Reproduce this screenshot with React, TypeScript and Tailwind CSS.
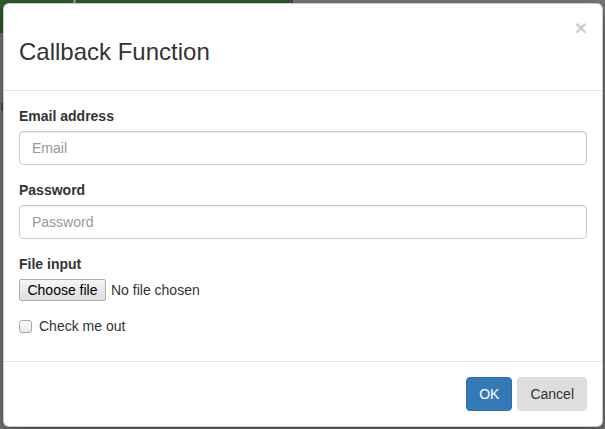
export default function App() {
    return (
        <div className="relative w-[605px] h-[429px] overflow-hidden bg-[#7a7a7a] font-['Liberation_Sans',Arial,sans-serif] text-[14px] text-[#333]">
            {/* page behind the backdrop */}
            <div className="flex h-[33px] w-[293px] bg-[#2e5c2e]">
                <div className="ml-[73px] h-[4px] w-[3px] bg-[#8a8a8a]"></div>
            </div>
            <div className="ml-[1px] mt-[70px] h-[8px] w-[2px] bg-[#6b4a2a]"></div>

            {/* modal */}
            <div className="absolute left-[3px] top-[3px] w-[600px] rounded-[6px] border border-black/20 bg-white shadow-[0_5px_15px_rgba(0,0,0,0.5)]">
                <div className="relative border-b border-[#e5e5e5] px-[15px] pb-[24px] pt-[34px]">
                    <h4 className="text-[24px] leading-[28px]">Callback Function</h4>
                    <button className="absolute right-[15px] top-[13px] text-[21px] font-bold leading-[21px] text-black opacity-20">×</button>
                </div>

                <div className="px-[15px] pt-[15px] pb-[15px]">
                    <div className="mb-[15px]">
                        <label className="mb-[5px] block font-bold leading-[20px]">Email address</label>
                        <input
                            type="email"
                            placeholder="Email"
                            className="block h-[34px] w-full rounded-[4px] border border-[#ccc] px-[12px] py-[6px] leading-[20px] shadow-[inset_0_1px_1px_rgba(0,0,0,0.075)] placeholder:text-[#999]"
                        />
                    </div>
                    <div className="mb-[15px]">
                        <label className="mb-[5px] block font-bold leading-[20px]">Password</label>
                        <input
                            type="password"
                            placeholder="Password"
                            className="block h-[34px] w-full rounded-[4px] border border-[#ccc] px-[12px] py-[6px] leading-[20px] shadow-[inset_0_1px_1px_rgba(0,0,0,0.075)] placeholder:text-[#999]"
                        />
                    </div>
                    <div className="mb-[15px]">
                        <label className="mb-[5px] block font-bold leading-[20px]">File input</label>
                        <div className="flex h-[22px] items-center">
                            <span className="flex h-[22px] w-[87px] items-center justify-center rounded-[2px] border border-[#adadad] bg-[linear-gradient(#f6f6f6,#dedede)] text-[14px] text-black">Choose file</span>
                            <span className="ml-[5px]">No file chosen</span>
                        </div>
                    </div>
                    <div className="mb-[10px] flex h-[20px] items-center">
                        <span className="h-[13px] w-[13px] rounded-[3px] border border-[#a6a6a6] bg-[linear-gradient(#fdfdfd,#e9e9e9)]"></span>
                        <span className="ml-[7px] leading-[20px]">Check me out</span>
                    </div>
                </div>

                <div className="flex justify-end gap-[5px] border-t border-[#e5e5e5] p-[15px]">
                    <button className="h-[34px] rounded-[4px] border border-[#2e6da4] bg-[#337ab7] px-[12px] text-white">OK</button>
                    <button className="h-[34px] rounded-[4px] border border-[#dcdcdc] bg-[#dedede] px-[12px] text-[#333]">Cancel</button>
                </div>
            </div>
        </div>
    )
}
